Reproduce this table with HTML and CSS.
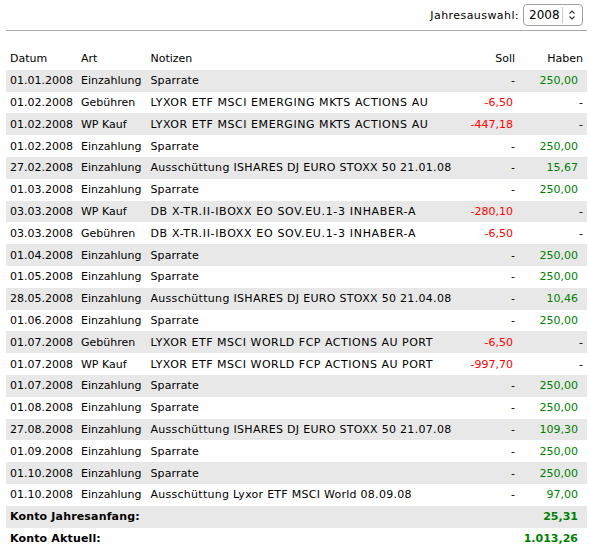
FILE: index.html
```html
<!DOCTYPE html>
<html>
<head>
<meta charset="utf-8">
<link rel="stylesheet" href="styles.css">
</head>
<body>
<div class="page">
  <div class="topbar">
    <span class="label">Jahresauswahl:</span>
    <div class="select">
      <span class="val">2008</span>
      <span class="sep"></span>
      <svg class="chev" width="8" height="12" viewBox="0 0 8 12"><path d="M1.5 4.5 L4 2 L6.5 4.5 M1.5 7.5 L4 10 L6.5 7.5" fill="none" stroke="#333" stroke-width="1.1"/></svg>
    </div>
  </div>
  <table class="tbl">
    <thead>
      <tr><th class="c-date">Datum</th><th class="c-art">Art</th><th class="c-note">Notizen</th><th class="c-soll">Soll</th><th class="c-haben">Haben</th></tr>
    </thead>
    <tbody>
      <tr class="odd"><td>01.01.2008</td><td>Einzahlung</td><td class="n-sp">Sparrate</td><td class="num">-</td><td class="num"><span class="pos">250,00</span></td></tr>
      <tr><td>01.02.2008</td><td>Gebühren</td><td class="n-caps">LYXOR ETF MSCI EMERGING MKTS ACTIONS AU</td><td class="num"><span class="neg">-6,50</span></td><td class="num">-</td></tr>
      <tr class="odd"><td>01.02.2008</td><td>WP Kauf</td><td class="n-caps">LYXOR ETF MSCI EMERGING MKTS ACTIONS AU</td><td class="num"><span class="neg">-447,18</span></td><td class="num">-</td></tr>
      <tr><td>01.02.2008</td><td>Einzahlung</td><td class="n-sp">Sparrate</td><td class="num">-</td><td class="num"><span class="pos">250,00</span></td></tr>
      <tr class="odd"><td>27.02.2008</td><td>Einzahlung</td><td class="n-mix">Ausschüttung ISHARES DJ EURO STOXX 50 21.01.08</td><td class="num">-</td><td class="num"><span class="pos">15,67</span></td></tr>
      <tr><td>01.03.2008</td><td>Einzahlung</td><td class="n-sp">Sparrate</td><td class="num">-</td><td class="num"><span class="pos">250,00</span></td></tr>
      <tr class="odd"><td>03.03.2008</td><td>WP Kauf</td><td class="n-db">DB X-TR.II-IBOXX EO SOV.EU.1-3 INHABER-A</td><td class="num"><span class="neg">-280,10</span></td><td class="num">-</td></tr>
      <tr><td>03.03.2008</td><td>Gebühren</td><td class="n-db">DB X-TR.II-IBOXX EO SOV.EU.1-3 INHABER-A</td><td class="num"><span class="neg">-6,50</span></td><td class="num">-</td></tr>
      <tr class="odd"><td>01.04.2008</td><td>Einzahlung</td><td class="n-sp">Sparrate</td><td class="num">-</td><td class="num"><span class="pos">250,00</span></td></tr>
      <tr><td>01.05.2008</td><td>Einzahlung</td><td class="n-sp">Sparrate</td><td class="num">-</td><td class="num"><span class="pos">250,00</span></td></tr>
      <tr class="odd"><td>28.05.2008</td><td>Einzahlung</td><td class="n-mix">Ausschüttung ISHARES DJ EURO STOXX 50 21.04.08</td><td class="num">-</td><td class="num"><span class="pos">10,46</span></td></tr>
      <tr><td>01.06.2008</td><td>Einzahlung</td><td class="n-sp">Sparrate</td><td class="num">-</td><td class="num"><span class="pos">250,00</span></td></tr>
      <tr class="odd"><td>01.07.2008</td><td>Gebühren</td><td class="n-wrd">LYXOR ETF MSCI WORLD FCP ACTIONS AU PORT</td><td class="num"><span class="neg">-6,50</span></td><td class="num">-</td></tr>
      <tr><td>01.07.2008</td><td>WP Kauf</td><td class="n-wrd">LYXOR ETF MSCI WORLD FCP ACTIONS AU PORT</td><td class="num"><span class="neg">-997,70</span></td><td class="num">-</td></tr>
      <tr class="odd"><td>01.07.2008</td><td>Einzahlung</td><td class="n-sp">Sparrate</td><td class="num">-</td><td class="num"><span class="pos">250,00</span></td></tr>
      <tr><td>01.08.2008</td><td>Einzahlung</td><td class="n-sp">Sparrate</td><td class="num">-</td><td class="num"><span class="pos">250,00</span></td></tr>
      <tr class="odd"><td>27.08.2008</td><td>Einzahlung</td><td class="n-mix">Ausschüttung ISHARES DJ EURO STOXX 50 21.07.08</td><td class="num">-</td><td class="num"><span class="pos">109,30</span></td></tr>
      <tr><td>01.09.2008</td><td>Einzahlung</td><td class="n-sp">Sparrate</td><td class="num">-</td><td class="num"><span class="pos">250,00</span></td></tr>
      <tr class="odd"><td>01.10.2008</td><td>Einzahlung</td><td class="n-sp">Sparrate</td><td class="num">-</td><td class="num"><span class="pos">250,00</span></td></tr>
      <tr><td>01.10.2008</td><td>Einzahlung</td><td class="n-low">Ausschüttung Lyxor ETF MSCI World 08.09.08</td><td class="num">-</td><td class="num"><span class="pos">97,00</span></td></tr>
      <tr class="odd total"><td colspan="3" class="t-label">Konto Jahresanfang:</td><td></td><td class="num"><span class="pos">25,31</span></td></tr>
      <tr class="total"><td colspan="3" class="t-label">Konto Aktuell:</td><td></td><td class="num"><span class="pos">1.013,26</span></td></tr>
    </tbody>
  </table>
</div>
</body>
</html>
```

FILE: styles.css
```css
html, body {
  margin: 0;
  padding: 0;
  background: #fff;
}
body {
  font-family: "DejaVu Sans", Verdana, sans-serif;
  font-size: 11px;
  color: #000;
}
.page {
  padding: 0 2px 0 6px;
}
.topbar {
  display: flex;
  justify-content: flex-end;
  align-items: center;
  gap: 4px;
  height: 31px;
  padding-right: 4px;
  border-bottom: 1px solid #a8a8a8;
  box-sizing: border-box;
}
.label {
  font-size: 11px;
  letter-spacing: 0.43px;
}
.select {
  display: flex;
  align-items: center;
  width: 60px;
  height: 22px;
  box-sizing: border-box;
  border: 1px solid #a0a0a0;
  border-radius: 4px;
  background: #fff;
  font-size: 12px;
  margin-top: 5px;
  margin-bottom: 5px;
}
.select .val {
  padding-left: 5px;
  width: 38px;
  box-sizing: border-box;
}
.select .sep {
  width: 1px;
  height: 16px;
  background: #c8c8c8;
}
.select .chev {
  margin-left: 5px;
}
.tbl {
  width: 581px;
  border-collapse: collapse;
  border-spacing: 0;
  margin-top: 17px;
}
.tbl th {
  font-weight: normal;
  text-align: left;
  height: 21.8px;
  padding: 0 4px;
}
.tbl td {
  height: 21.8px;
  padding: 0 4px;
  white-space: nowrap;
}
.tbl tr {
  height: 21.8px;
}
.tbl .c-date { width: 62px; }
.tbl .c-art { width: 63px; }
.tbl .c-soll { width: 80px; text-align: right; box-sizing: border-box; }
.tbl .c-haben { width: 69px; text-align: right; box-sizing: border-box; }
.tbl .num { text-align: right; }
.tbl tr.odd td { background: #e8e8e8; }
.n-sp { letter-spacing: 0.14px; }
.n-caps { letter-spacing: 0.55px; }
.n-mix { letter-spacing: 0.31px; }
.n-db { letter-spacing: 0.67px; }
.n-wrd { letter-spacing: 0.51px; }
.n-low { letter-spacing: 0.27px; }
.t-label { letter-spacing: 0.16px; }
.neg { color: #ff0000; padding-right: 2px; }
.pos { color: #008000; padding-right: 5px; }
.total td { font-weight: bold; }
```
